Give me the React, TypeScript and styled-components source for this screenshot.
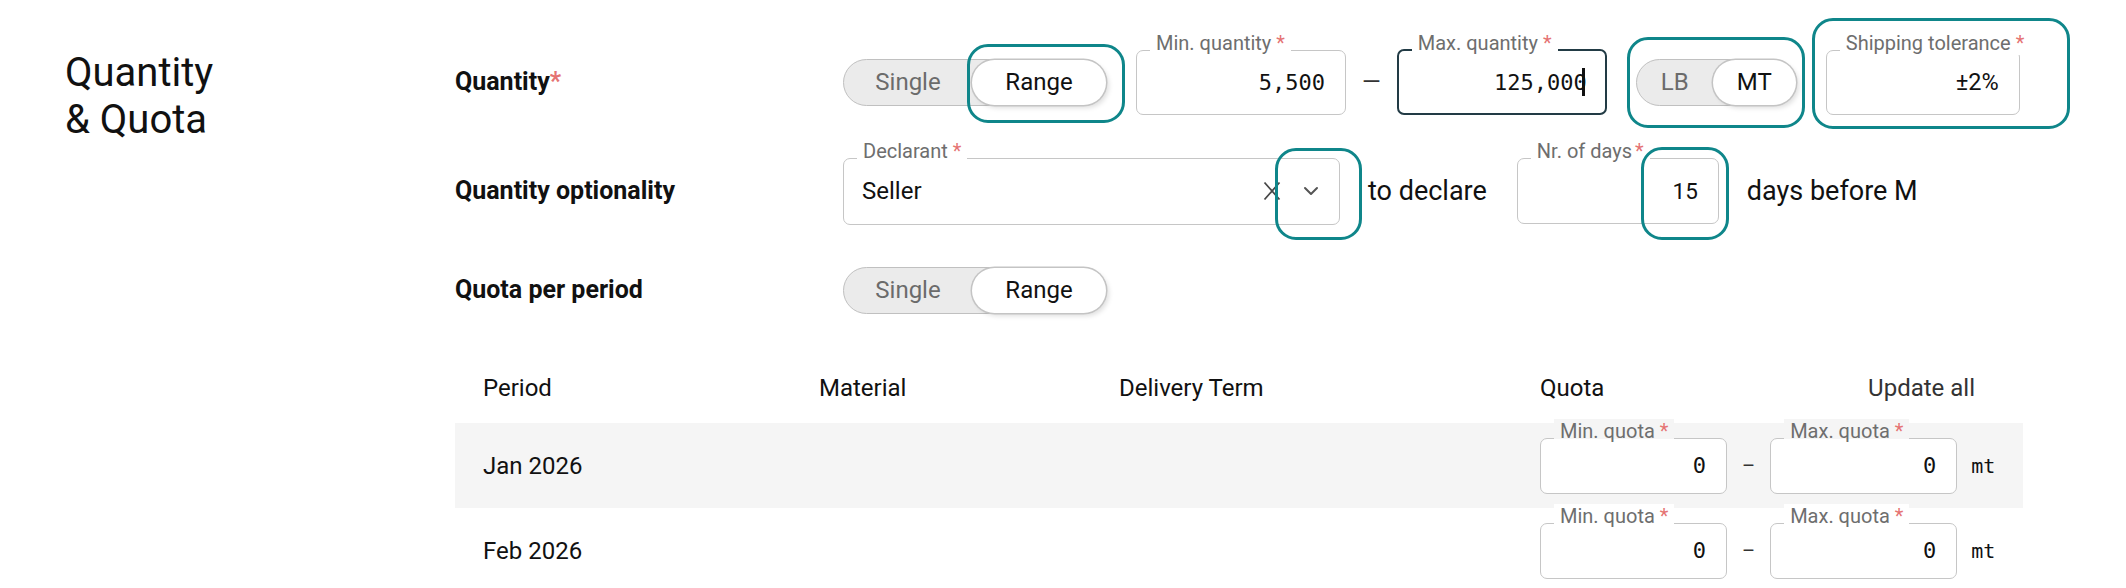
import React from 'react';
import styled, { createGlobalStyle } from 'styled-components';

const TEAL = '#0f868a';
const BAND = '#f5f5f5';
const MONO = "'DejaVu Sans Mono', 'Liberation Mono', monospace";

const GlobalStyle = createGlobalStyle`
  html, body {
    margin: 0;
    padding: 0;
    background: #fff;
  }
  body {
    font-family: Roboto, 'Noto Sans', Arial, sans-serif;
    color: #111;
  }
  * {
    box-sizing: border-box;
  }
`;

const Page = styled.div`
  display: flex;
  align-items: flex-start;
  width: 2126px;
  height: 588px;
  overflow: hidden;
  padding: 34px 0 0 65px;
`;

const Title = styled.h2`
  margin: 0;
  width: 390px;
  padding-top: 15px;
  font-size: 40px;
  font-weight: 400;
  line-height: 47px;
`;

const Form = styled.div`
  width: 1568px;
  display: flex;
  flex-direction: column;
`;

const FormRow = styled.div<{ $h: number }>`
  flex: none;
  display: grid;
  grid-template-columns: 388px 1fr;
  align-items: center;
  height: ${(p) => p.$h}px;
`;

const RowLabel = styled.div`
  font-size: 25px;
  font-weight: 700;
  line-height: 30px;
`;

const Req = styled.span<{ $gap?: number }>`
  color: #e57373;
  margin-left: ${(p) => p.$gap ?? 0}px;
`;

const Controls = styled.div<{ $gap: number }>`
  display: flex;
  align-items: center;
  gap: ${(p) => p.$gap}px;
`;

const Text = styled.span<{ $mono?: boolean; $size?: number; $color?: string }>`
  font-family: ${(p) => (p.$mono ? MONO : 'inherit')};
  font-size: ${(p) => p.$size ?? 24}px;
  color: ${(p) => p.$color ?? '#111'};
  white-space: nowrap;
`;

/* segmented Single / Range switch */
const Pill = styled.div<{ $w: number }>`
  position: relative;
  display: flex;
  width: ${(p) => p.$w}px;
  height: 47px;
  border: 1.5px solid #c0c0c0;
  border-radius: 999px;
  background: #ebebeb;
`;

const Segment = styled.div<{ $active?: boolean; $w?: number }>`
  position: relative;
  flex: ${(p) => (p.$w ? `0 0 ${p.$w}px` : '1 1 auto')};
  display: flex;
  align-items: center;
  justify-content: center;
  border-radius: 999px;
  font-size: 24px;
  color: ${(p) => (p.$active ? '#111' : '#6b6b6b')};
  background: ${(p) => (p.$active ? '#fff' : 'transparent')};
  box-shadow: ${(p) =>
    p.$active ? '0 0 0 1.5px #c4c4c4, 3px 3px 5px rgba(0, 0, 0, 0.13)' : 'none'};
`;

/* teal outline drawn over a control */
const Highlight = styled.span<{ $inset: string }>`
  position: absolute;
  inset: ${(p) => p.$inset};
  border: 3px solid ${TEAL};
  border-radius: 21px;
  pointer-events: none;
  z-index: 2;
`;

/* outlined input with floating label */
const FieldBox = styled.div<{ $w: number; $h: number; $focus?: boolean; $start?: boolean }>`
  position: relative;
  flex: none;
  width: ${(p) => p.$w}px;
  height: ${(p) => p.$h}px;
  border: ${(p) => (p.$focus ? '2px solid #223b45' : '1.5px solid #c6c6c6')};
  border-radius: 7px;
  background: #fff;
  display: flex;
  align-items: center;
  justify-content: ${(p) => (p.$start ? 'space-between' : 'flex-end')};
  padding: 0 20px 0 18px;
`;

const FloatLabel = styled.span<{ $bg: string }>`
  position: absolute;
  top: -20px;
  left: 13px;
  padding: 0 6px;
  font-size: 20px;
  line-height: 24px;
  color: #6e6e6e;
  white-space: nowrap;
  background: linear-gradient(${(p) => p.$bg} 20px, #fff 20px);
`;

const Caret = styled.span`
  flex: none;
  width: 3px;
  height: 28px;
  margin-left: -5px;
  background: #111;
`;

const SelectIcons = styled.div`
  display: flex;
  align-items: center;
  gap: 21px;
`;

const Table = styled.div`
  flex: none;
  margin-top: 25px;
  display: flex;
  flex-direction: column;
`;

const TRow = styled.div<{ $head?: boolean; $shade?: boolean }>`
  flex: none;
  display: grid;
  grid-template-columns: 336px 300px 421px 1fr;
  align-items: center;
  height: ${(p) => (p.$head ? 70 : 85)}px;
  padding: 0 48px 0 28px;
  background: ${(p) => (p.$shade ? BAND : 'transparent')};
  font-size: 24px;
`;

const QuotaHead = styled.div`
  display: flex;
  justify-content: space-between;
  align-items: center;
`;

const QuotaCell = styled.div`
  display: flex;
  align-items: center;
  gap: 15px;
`;

type FieldProps = {
  label: string;
  w: number;
  h: number;
  bg?: string;
  focus?: boolean;
  start?: boolean;
  gap?: number;
  children?: React.ReactNode;
};

function Field({ label, w, h, bg = '#fff', focus, start, gap = 5, children }: FieldProps) {
  return (
    <FieldBox $w={w} $h={h} $focus={focus} $start={start}>
      <FloatLabel $bg={bg}>
        {label}
        <Req $gap={gap}>*</Req>
      </FloatLabel>
      {children}
    </FieldBox>
  );
}

const ClearIcon = () => (
  <svg width="20" height="20" viewBox="0 0 20 20">
    <path d="M2.5 1.5 L17.5 18.5 M17.5 1.5 L2.5 18.5" stroke="#474747" strokeWidth="1.8" fill="none" />
  </svg>
);

const ChevronIcon = () => (
  <svg width="16" height="10" viewBox="0 0 16 10">
    <path
      d="M2 2 L8 8 L14 2"
      stroke="#555"
      strokeWidth="2"
      fill="none"
      strokeLinecap="round"
      strokeLinejoin="round"
    />
  </svg>
);

const periods = ['Jan 2026', 'Feb 2026'];

export default function App() {
  return (
    <>
      <GlobalStyle />
      <Page>
        <Title>
          Quantity
          <br />& Quota
        </Title>
        <Form>
          <FormRow $h={96}>
            <RowLabel>
              Quantity<Req>*</Req>
            </RowLabel>
            <Controls $gap={29}>
              <Pill $w={264}>
                <Segment $w={128}>Single</Segment>
                <Segment $active>
                  Range
                  <Highlight $inset="-16px -19px -18px -5px" />
                </Segment>
              </Pill>
              <Controls $gap={16}>
                <Field label="Min. quantity" w={210} h={65}>
                  <Text $mono $size={22}>5,500</Text>
                </Field>
                <Text $color="#333">—</Text>
                <Field label="Max. quantity" w={210} h={66} focus>
                  <Text $mono $size={22}>125,000</Text>
                  <Caret />
                </Field>
              </Controls>
              <Pill $w={161}>
                <Segment $w={76}>LB</Segment>
                <Segment $active>MT</Segment>
                <Highlight $inset="-23px -9px -23px -10px" />
              </Pill>
              <Field label="Shipping tolerance" w={194} h={65}>
                <Text $size={23.5}>±2%</Text>
                <Highlight $inset="-33px -51px -15px -15px" />
              </Field>
            </Controls>
          </FormRow>

          <FormRow $h={122}>
            <RowLabel>Quantity optionality</RowLabel>
            <Controls $gap={28}>
              <Field label="Declarant" w={497} h={67} start>
                <Text>Seller</Text>
                <SelectIcons>
                  <ClearIcon />
                  <ChevronIcon />
                </SelectIcons>
                <Highlight $inset="-11px -23px -16px 431px" />
              </Field>
              <Text $size={27} style={{ marginRight: 2 }}>
                to declare
              </Text>
              <Field label="Nr. of days" w={202} h={66} gap={3}>
                <Text $size={22.5}>15</Text>
                <Highlight $inset="-12px -11px -17px 123px" />
              </Field>
              <Text $size={27}>days before M</Text>
            </Controls>
          </FormRow>

          <FormRow $h={76}>
            <RowLabel>Quota per period</RowLabel>
            <Controls $gap={29}>
              <Pill $w={264}>
                <Segment $w={128}>Single</Segment>
                <Segment $active>Range</Segment>
              </Pill>
            </Controls>
          </FormRow>

          <Table>
            <TRow $head>
              <span>Period</span>
              <span>Material</span>
              <span>Delivery Term</span>
              <QuotaHead>
                <span>Quota</span>
                <Text $color="#333">Update all</Text>
              </QuotaHead>
            </TRow>
            {periods.map((period, i) => (
              <TRow key={period} $shade={i % 2 === 0}>
                <span>{period}</span>
                <span />
                <span />
                <QuotaCell>
                  <Field label="Min. quota" w={187} h={56} bg={i % 2 === 0 ? BAND : '#fff'}>
                    <Text $mono $size={22}>0</Text>
                  </Field>
                  <Text $size={20} $color="#333">–</Text>
                  <Field label="Max. quota" w={187} h={56} bg={i % 2 === 0 ? BAND : '#fff'}>
                    <Text $mono $size={22}>0</Text>
                  </Field>
                  <Text $mono $size={20} style={{ marginLeft: -1 }}>
                    mt
                  </Text>
                </QuotaCell>
              </TRow>
            ))}
          </Table>
        </Form>
      </Page>
    </>
  );
}
